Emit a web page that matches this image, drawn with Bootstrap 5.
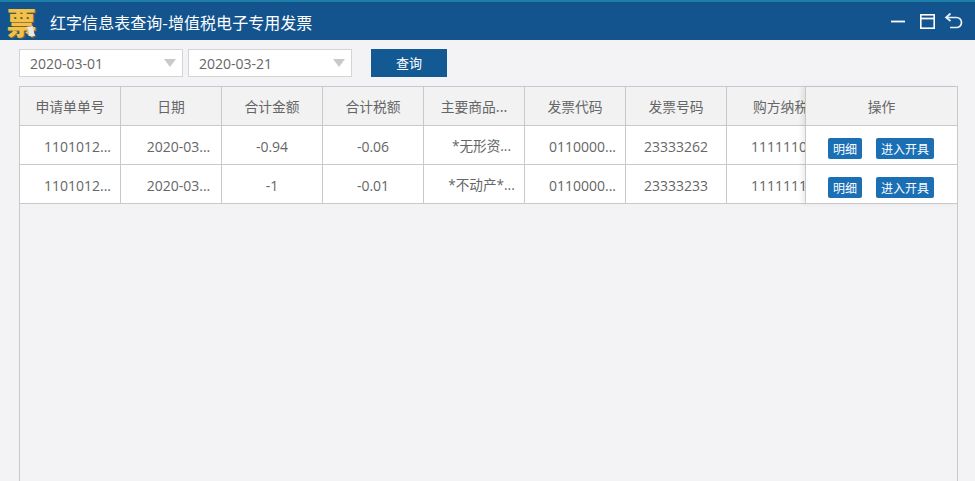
<!DOCTYPE html>
<html lang="zh-CN">
<head>
<meta charset="utf-8">
<title>红字信息表查询</title>
<link rel="stylesheet" href="https://cdn.jsdelivr.net/npm/bootstrap@5.3.0/dist/css/bootstrap.min.css">
<style>
html,body{height:100%;}
body{font-family:"Open Sans","Noto Sans CJK SC",sans-serif;font-size:14px;color:#666;background:#f3f3f5;overflow:hidden;}
.app-head{height:40px;background:#13548f;border-top:2px solid #1b7fa8;color:#fff;padding-left:6px;}
.logo-mark{position:relative;width:31px;height:31px;font-family:"Noto Sans CJK SC",sans-serif;font-weight:900;font-size:30px;line-height:31px;color:#f2c04c;text-align:center;text-shadow:1px 1px 0 #7d6220;}
.logo-curl{position:absolute;right:1px;bottom:0;width:11px;height:11px;}
.app-title{font-family:"Noto Sans CJK SC",sans-serif;font-size:16px;margin-left:13px;letter-spacing:.05px;padding-top:1px;}
.head-icons{gap:13px;padding-right:12px;}
.head-icons svg{display:block;}
.head-icons svg:last-child{margin-left:-5px;}
.tool-row{height:46px;padding:9px 0 0 19px;}
.date-box{width:164px;height:28px;background:#fff;border:1px solid #d4d4d6;padding:2px 6px 0 10px;line-height:24px;color:#666;}
.date-gap{margin-left:5px;}
.caret-down{width:0;height:0;margin-top:-2px;border-left:6px solid transparent;border-right:6px solid transparent;border-top:8px solid #c9c9cb;}
.query-btn{width:76px;height:28px;margin-left:19px;padding:0;border:0;border-radius:0;background:#135a94;color:#fff;font-family:"Noto Sans CJK SC",sans-serif;font-size:13px;}
.query-btn:hover{background:#135a94;color:#fff;}
.grid-box{margin-left:19px;width:939px;border:1px solid #c9c9cb;flex:1 1 auto;min-height:0;margin-bottom:-2px;}
.grid-scroll{width:785px;overflow:hidden;flex:none;}
.grid-fixed{width:152px;flex:none;box-shadow:-3px 0 4px rgba(0,0,0,.07);}
.data-grid{table-layout:fixed;margin:0;border-collapse:separate;border-spacing:0;--bs-table-bg:transparent;--bs-table-color:#666;}
.grid-scroll .data-grid{width:808px;}
.grid-fixed .data-grid{width:152px;}
.data-grid th,.data-grid td{height:39px;padding:0 4px;text-align:center;vertical-align:middle;font-weight:400;white-space:nowrap;overflow:hidden;border:0;border-right:1px solid #c9c9cb;border-bottom:1px solid #c9c9cb;box-shadow:none;}
.data-grid th{font-family:"Noto Sans CJK SC",sans-serif;font-size:13.8px;background:#f2f2f3;}
.data-grid th.left-cell{text-align:left;padding-left:26px;}
.data-grid td{background:#fff;font-size:14px;color:#666;padding-top:2px;}
.data-grid .cjk-cell{font-family:"Open Sans","Noto Sans CJK SC",sans-serif;font-size:13.6px;}
.data-grid td.trunc{padding-left:19px;}
.data-grid td.left-cell{text-align:left;padding-left:24px;}
.grid-fixed .data-grid th,.grid-fixed .data-grid td{border-right:0;border-left:1px solid #c9c9cb;}
.act-btn{height:21px;padding:0 5px;border:0;border-radius:2px;background:#1a6fb5;color:#fff;font-family:"Noto Sans CJK SC",sans-serif;font-size:12px;line-height:21px;}
.act-btn:hover{background:#1a6fb5;color:#fff;}
.act-wrap{gap:14px;margin-top:5px;margin-left:-1px;}
</style>
</head>
<body class="d-flex flex-column">
<header class="app-head d-flex align-items-center">
  <div class="logo-mark">票<svg class="logo-curl" viewBox="0 0 10 10"><path d="M1 1 L7 0 L9 9 L3 9 Q5 5 1 1Z" fill="#e6e8ea"/></svg></div>
  <div class="app-title">红字信息表查询-增值税电子专用发票</div>
  <div class="head-icons d-flex align-items-center ms-auto">
    <svg width="16" height="16" viewBox="0 0 16 16"><path d="M1 8.500H15" stroke="#fff" stroke-width="1.800"/></svg>
    <svg width="17" height="17" viewBox="0 0 17 17" fill="none" stroke="#fff"><rect x="1.800" y="1.800" width="13.400" height="13.400" stroke-width="1.600"/><path d="M1.500 5.500H15.500" stroke-width="1.800"/></svg>
    <svg width="19" height="19" viewBox="0 0 19 19" fill="none" stroke="#e8f1f7" stroke-width="1.700"><path d="M6.500 1.500 L2 5.500 L6.500 9"/><path d="M2.500 5.500H12.500A5 5 0 0 1 12.500 15.500H6"/></svg>
  </div>
</header>
<div class="tool-row d-flex">
  <div class="date-box d-flex align-items-center justify-content-between"><span>2020-03-01</span><i class="caret-down"></i></div>
  <div class="date-box date-gap d-flex align-items-center justify-content-between"><span>2020-03-21</span><i class="caret-down"></i></div>
  <button type="button" class="btn query-btn">查询</button>
</div>
<main class="grid-box d-flex align-items-start">
  <div class="grid-scroll">
    <table class="table data-grid">
      <colgroup><col span="7" style="width:101px"><col style="width:101px"></colgroup>
      <thead><tr><th>申请单单号</th><th>日期</th><th>合计金额</th><th>合计税额</th><th>主要商品...</th><th>发票代码</th><th>发票号码</th><th class="left-cell">购方纳税</th></tr></thead>
      <tbody>
        <tr><td class="trunc">1101012...</td><td class="trunc">2020-03...</td><td>-0.94</td><td>-0.06</td><td class="trunc cjk-cell">*无形资...</td><td class="trunc">0110000...</td><td>23333262</td><td class="left-cell">1111110</td></tr>
        <tr><td class="trunc">1101012...</td><td class="trunc">2020-03...</td><td>-1</td><td>-0.01</td><td class="trunc cjk-cell">*不动产*...</td><td class="trunc">0110000...</td><td>23333233</td><td class="left-cell">1111111</td></tr>
      </tbody>
    </table>
  </div>
  <div class="grid-fixed">
    <table class="table data-grid">
      <thead><tr><th>操作</th></tr></thead>
      <tbody>
        <tr><td><div class="act-wrap d-flex justify-content-center"><button type="button" class="btn act-btn">明细</button><button type="button" class="btn act-btn">进入开具</button></div></td></tr>
        <tr><td><div class="act-wrap d-flex justify-content-center"><button type="button" class="btn act-btn">明细</button><button type="button" class="btn act-btn">进入开具</button></div></td></tr>
      </tbody>
    </table>
  </div>
</main>
<script src="https://cdn.jsdelivr.net/npm/bootstrap@5.3.0/dist/js/bootstrap.bundle.min.js"></script>
</body>
</html>
